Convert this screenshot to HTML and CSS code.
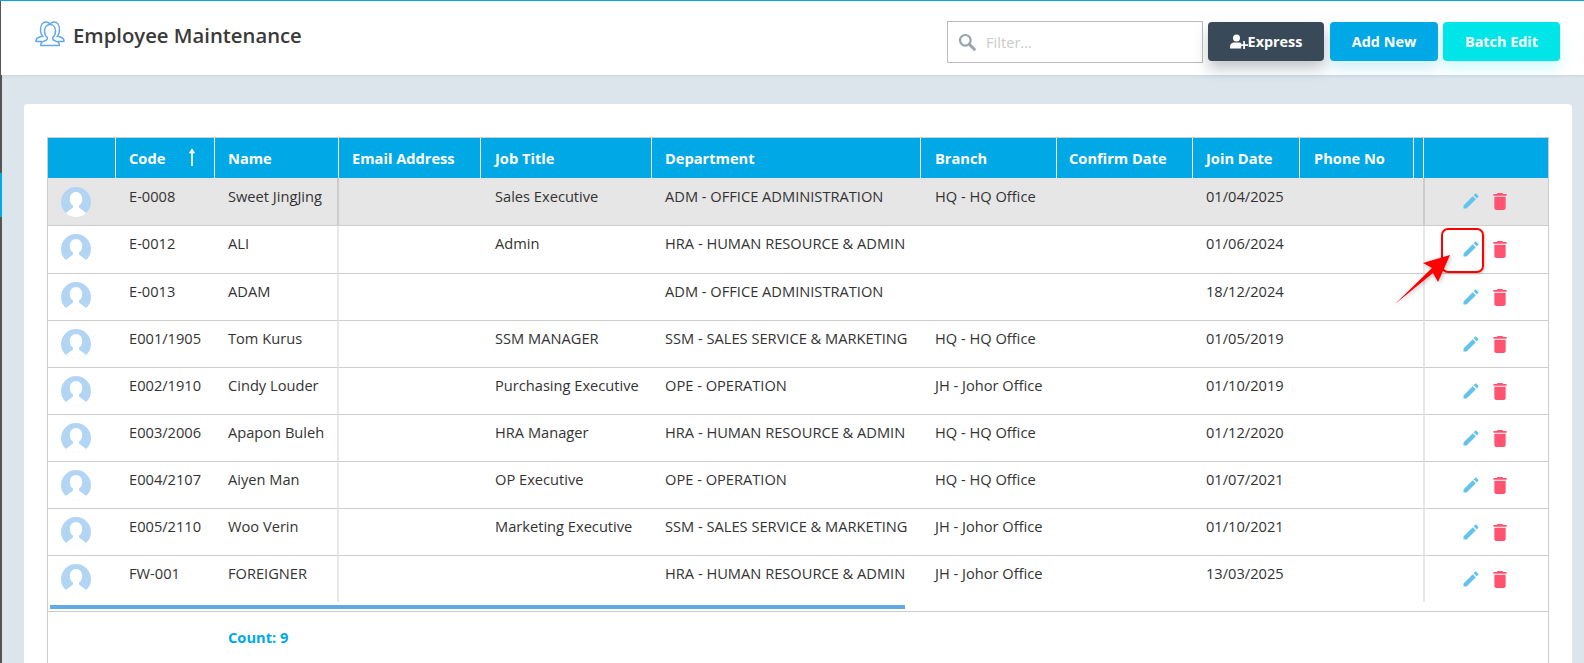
FILE: index.html
```html
<!DOCTYPE html>
<html lang="en">
<head>
<meta charset="utf-8">
<title>Employee Maintenance</title>
<link rel="stylesheet" href="styles.css">
</head>
<body>
<svg class="defs" width="0" height="0" aria-hidden="true">
  <symbol id="avatar" viewBox="0 0 30 30">
    <circle cx="15" cy="15" r="15" fill="#b3d5f4"/>
    <path d="M15 5c-3.600 0-6.200 3-6.200 7 0 3 1.200 5.300 3.200 6.600.2 1.400-.3 2.400-1.600 3.200L4.800 26A15 15 0 0 0 25.200 26l-5.600-4.200c-1.300-.8-1.800-1.800-1.600-3.200 2-1.300 3.200-3.600 3.200-6.600 0-4-2.600-7-6.200-7z" fill="#fff"/>
  </symbol>
  <symbol id="pencil" viewBox="0 0 24 24">
    <path d="M3 17.250V21h3.750L17.810 9.940l-3.750-3.750L3 17.250zM20.710 7.040c.39-.39.39-1.020 0-1.410l-2.340-2.340c-.39-.39-1.020-.39-1.410 0l-1.830 1.830 3.750 3.750 1.830-1.830z"/>
  </symbol>
  <symbol id="trash" viewBox="0 0 14 18">
    <path d="M1 16c0 1.100.9 2 2 2h8c1.100 0 2-.9 2-2V4H1v12zM14 1h-3.500l-1-1h-5l-1 1H0v2h14V1z"/>
  </symbol>
</svg>

<header class="topbar">
  <div class="title">
    <svg class="title-icon" viewBox="0 0 30 26" fill="none" stroke="#62a9ec" stroke-width="1.500" stroke-linejoin="round">
      <path d="M8.500 16c-1-.9-1.700-1.800-2.200-3-.5-1.200-.8-2.800-.8-4.200C5.500 4.200 7.700 1 11 1c1.500 0 2.800.6 3.800 1.800"/>
      <path d="M21.500 16c1-.9 1.700-1.800 2.200-3 .5-1.200.8-2.800.8-4.200C24.500 4.200 22.300 1 19 1c-1.500 0-2.800.6-3.800 1.800"/>
      <path d="M7 20.500H1c-.1-2 .3-3 2-3.700l3.800-1.600"/>
      <path d="M23 20.500h6c.1-2-.3-3-2-3.700l-3.800-1.600"/>
      <path d="M15 3.500c-3.200 0-5.500 2.800-5.500 6.500 0 2.800 1 5.200 2.900 6.600.2 1.500-.2 2.200-1.700 2.900l-3.300 1.400c-1.500.7-1.800 1.700-1.700 3.600h18.600c.1-1.900-.2-2.900-1.700-3.600l-3.300-1.400c-1.500-.7-1.900-1.400-1.700-2.900 1.900-1.400 2.900-3.800 2.900-6.600 0-3.700-2.300-6.500-5.500-6.500z"/>
    </svg>
    <h1 class="title-text">Employee Maintenance</h1>
  </div>
  <div class="actions">
    <label class="filter">
      <svg class="filter-icon" viewBox="0 0 18 18" fill="none" stroke="#9aa4ad">
        <circle cx="7.300" cy="7.300" r="5.300" stroke-width="2.200"/>
        <path d="M11.300 11.300l5 5" stroke-width="3" stroke-linecap="round"/>
      </svg>
      <input class="filter-input" type="text" placeholder="Filter...">
    </label>
    <button class="btn btn-express" type="button">
      <svg class="btn-icon" viewBox="0 0 18 14" fill="#fff">
        <circle cx="6.500" cy="3.600" r="3.500"/>
        <path d="M0 14v-2c0-2.200 1.800-4 4-4h5c.8 0 1.500.2 2.100.6V14z"/>
        <path d="M13.200 6.500h1.700v3.200H18v1.700h-3.100V14.500h-1.700v-3.100H10V9.700h3.200z"/>
      </svg>Express
    </button>
    <button class="btn btn-add" type="button">Add New</button>
    <button class="btn btn-batch" type="button">Batch Edit</button>
  </div>
</header>

<div class="body-wrap">
  <div class="rail"></div>
  <main class="content">
    <section class="card">
      <div class="grid-wrap">
        <table class="grid">
          <colgroup>
            <col class="c-avatar"><col class="c-code"><col class="c-name"><col class="c-email"><col class="c-job"><col class="c-dept"><col class="c-branch"><col class="c-confirm"><col class="c-join"><col class="c-phone"><col class="c-gap"><col class="c-act">
          </colgroup>
          <thead>
            <tr>
              <th></th>
              <th><span class="sort-head">Code<svg class="sort-icon" viewBox="0 0 8 18" fill="none" stroke="#fff"><path d="M4 18V1.500" stroke-width="1.700"/><path d="M1.300 5L4 .8 6.700 5z" fill="#fff" stroke-width=".5"/></svg></span></th>
              <th>Name</th><th>Email Address</th><th>Job Title</th><th>Department</th><th>Branch</th><th>Confirm Date</th><th>Join Date</th><th>Phone No</th><th></th><th></th>
            </tr>
          </thead>
          <tbody>
            <tr class="row selected">
              <td><svg class="avatar"><use href="#avatar"/></svg></td><td>E-0008</td><td class="sep">Sweet JingJing</td><td></td><td>Sales Executive</td><td>ADM - OFFICE ADMINISTRATION</td><td>HQ - HQ Office</td><td></td><td>01/04/2025</td><td></td><td class="gap"></td>
              <td class="act"><div class="tools"><svg class="pencil"><use href="#pencil"/></svg><svg class="trash"><use href="#trash"/></svg></div></td>
            </tr>
            <tr class="row tall">
              <td><svg class="avatar"><use href="#avatar"/></svg></td><td>E-0012</td><td class="sep">ALI</td><td></td><td>Admin</td><td>HRA - HUMAN RESOURCE &amp; ADMIN</td><td></td><td></td><td>01/06/2024</td><td></td><td class="gap"></td>
              <td class="act"><div class="tools"><svg class="pencil"><use href="#pencil"/></svg><svg class="trash"><use href="#trash"/></svg></div></td>
            </tr>
            <tr class="row">
              <td><svg class="avatar"><use href="#avatar"/></svg></td><td>E-0013</td><td class="sep">ADAM</td><td></td><td></td><td>ADM - OFFICE ADMINISTRATION</td><td></td><td></td><td>18/12/2024</td><td></td><td class="gap"></td>
              <td class="act"><div class="tools"><svg class="pencil"><use href="#pencil"/></svg><svg class="trash"><use href="#trash"/></svg></div></td>
            </tr>
            <tr class="row">
              <td><svg class="avatar"><use href="#avatar"/></svg></td><td>E001/1905</td><td class="sep">Tom Kurus</td><td></td><td>SSM MANAGER</td><td>SSM - SALES SERVICE &amp; MARKETING</td><td>HQ - HQ Office</td><td></td><td>01/05/2019</td><td></td><td class="gap"></td>
              <td class="act"><div class="tools"><svg class="pencil"><use href="#pencil"/></svg><svg class="trash"><use href="#trash"/></svg></div></td>
            </tr>
            <tr class="row">
              <td><svg class="avatar"><use href="#avatar"/></svg></td><td>E002/1910</td><td class="sep">Cindy Louder</td><td></td><td>Purchasing Executive</td><td>OPE - OPERATION</td><td>JH - Johor Office</td><td></td><td>01/10/2019</td><td></td><td class="gap"></td>
              <td class="act"><div class="tools"><svg class="pencil"><use href="#pencil"/></svg><svg class="trash"><use href="#trash"/></svg></div></td>
            </tr>
            <tr class="row">
              <td><svg class="avatar"><use href="#avatar"/></svg></td><td>E003/2006</td><td class="sep">Apapon Buleh</td><td></td><td>HRA Manager</td><td>HRA - HUMAN RESOURCE &amp; ADMIN</td><td>HQ - HQ Office</td><td></td><td>01/12/2020</td><td></td><td class="gap"></td>
              <td class="act"><div class="tools"><svg class="pencil"><use href="#pencil"/></svg><svg class="trash"><use href="#trash"/></svg></div></td>
            </tr>
            <tr class="row">
              <td><svg class="avatar"><use href="#avatar"/></svg></td><td>E004/2107</td><td class="sep">Aiyen Man</td><td></td><td>OP Executive</td><td>OPE - OPERATION</td><td>HQ - HQ Office</td><td></td><td>01/07/2021</td><td></td><td class="gap"></td>
              <td class="act"><div class="tools"><svg class="pencil"><use href="#pencil"/></svg><svg class="trash"><use href="#trash"/></svg></div></td>
            </tr>
            <tr class="row">
              <td><svg class="avatar"><use href="#avatar"/></svg></td><td>E005/2110</td><td class="sep">Woo Verin</td><td></td><td>Marketing Executive</td><td>SSM - SALES SERVICE &amp; MARKETING</td><td>JH - Johor Office</td><td></td><td>01/10/2021</td><td></td><td class="gap"></td>
              <td class="act"><div class="tools"><svg class="pencil"><use href="#pencil"/></svg><svg class="trash"><use href="#trash"/></svg></div></td>
            </tr>
            <tr class="row last">
              <td><svg class="avatar"><use href="#avatar"/></svg></td><td>FW-001</td><td class="sep">FOREIGNER</td><td></td><td></td><td>HRA - HUMAN RESOURCE &amp; ADMIN</td><td>JH - Johor Office</td><td></td><td>13/03/2025</td><td></td><td class="gap"></td>
              <td class="act"><div class="tools"><svg class="pencil"><use href="#pencil"/></svg><svg class="trash"><use href="#trash"/></svg></div></td>
            </tr>
          </tbody>
        </table>
        <div class="scrollbar"></div>
        <div class="grid-foot"><span class="count">Count: 9</span></div>
      </div>
    </section>
  </main>
</div>

<div class="callout-box"></div>
<svg class="callout-arrow" viewBox="0 0 60 52" aria-hidden="true">
  <path d="M1 50L38 14l-9-5L56 1 44 28l-5-9z" fill="#f00"/>
</svg>
</body>
</html>
```
FILE: styles.css
```css
* { box-sizing: border-box; }
html, body { height: 100%; }
body {
  margin: 0;
  height: 663px;
  overflow: hidden;
  display: flex;
  flex-direction: column;
  font-family: "Open Sans", "Liberation Sans", sans-serif;
  font-size: 14.65px;
  color: #333;
  background: #dde5ec;
  border-top: 1px solid #00a9e6;
}
.defs { position: absolute; }

.topbar {
  flex: none;
  height: 74px;
  display: flex;
  justify-content: space-between;
  background: #fff;
  border-left: 1px solid #555;
  padding: 0 24px 0 34px;
  box-shadow: 0 1px 3px rgba(120, 140, 160, .18);
  position: relative;
}
.title { display: flex; align-items: flex-start; padding-top: 20px; }
.title-icon { width: 30px; height: 26px; margin-right: 8px; }
.title-text {
  margin: 1px 0 0;
  font-size: 20.3px;
  line-height: 27px;
  font-weight: 600;
  color: #3a3a3a;
}
.actions { display: flex; align-items: flex-start; padding-top: 20px; }
.filter {
  width: 256px;
  height: 42px;
  display: flex;
  align-items: center;
  border: 1px solid #bbb;
  padding-left: 10px;
  margin-right: 5px;
  background: #fff;
}
.filter-icon { width: 18px; height: 18px; flex: none; }
.filter-input {
  border: 0;
  outline: 0;
  flex: 1;
  min-width: 0;
  margin-left: 8px;
  font: 14.65px "Open Sans", "Liberation Sans", sans-serif;
  background: transparent;
}
.filter-input::placeholder { color: #ccc; opacity: 1; }
.btn {
  height: 39px;
  margin-top: 1px;
  border: 0;
  border-radius: 4px;
  color: #fff;
  font: 700 14.4px "Open Sans", "Liberation Sans", sans-serif;
  display: flex;
  align-items: center;
  justify-content: center;
  padding: 0;
}
.btn-express {
  width: 116px;
  margin-right: 6px;
  background: #3a4957;
  box-shadow: 0 8px 14px rgba(58, 73, 87, .3);
}
.btn-add {
  width: 108px;
  margin-right: 5px;
  background: #00a9e6;
  box-shadow: 0 8px 14px rgba(0, 169, 230, .18);
}
.btn-batch {
  width: 117px;
  background: #00e5e8;
  box-shadow: 0 8px 14px rgba(0, 229, 232, .18);
}
.btn-icon { width: 18px; height: 15px; flex: none; }

.body-wrap { flex: 1; min-height: 0; display: flex; }
.rail {
  flex: none;
  width: 2px;
  background: linear-gradient(#555 0 98px, #00a9e6 98px 142px, #555 142px);
}
.content { flex: 1; min-width: 0; padding: 29px 12px 0 22px; }
.card {
  height: 100%;
  background: #fff;
  border-radius: 4px 4px 0 0;
  padding: 33px 23px 0;
}
.grid-wrap {
  height: 100%;
  border: 1px solid #ccc;
  border-bottom: 0;
}
.grid {
  width: 1500px;
  table-layout: fixed;
  border-collapse: separate;
  border-spacing: 0;
}
.c-avatar { width: 68px; }
.c-code { width: 99px; }
.c-name { width: 124px; }
.c-email { width: 142px; }
.c-job { width: 171px; }
.c-dept { width: 269px; }
.c-branch { width: 136px; }
.c-confirm { width: 136px; }
.c-join { width: 107px; }
.c-phone { width: 114px; }
.c-gap { width: 10px; }
.c-act { width: 124px; }

.grid th {
  height: 40px;
  padding: 0 0 0 13px;
  background: #00a9e6;
  color: #fff;
  font-weight: 700;
  text-align: left;
  white-space: nowrap;
  border-right: 1px solid #fff;
}
.grid th:last-child { border-right: 0; }
.grid th:nth-child(5), .grid th:nth-child(7), .grid th:nth-child(10) { padding-left: 14px; }
.grid th:nth-child(8) { padding-left: 12px; }
.sort-head { display: flex; align-items: center; width: 67px; justify-content: space-between; }
.sort-icon { width: 8px; height: 18px; margin-top: -3px; }

.row td {
  height: 47px;
  padding: 8px 0 0 13px;
  vertical-align: top;
  line-height: 19px;
  white-space: nowrap;
  border-bottom: 1px solid #ccc;
}
.row td:nth-child(5), .row td:nth-child(7) { padding-left: 14px; }
.row.tall td, .row.selected td { height: 48px; }
.row.last td { height: 46px; border-bottom: 0; }
.row.selected td { background: #e6e6e6; padding-top: 9px; }
.row td.sep { border-right: 2px solid #e8e8e8; }
.row.selected td.sep { border-right-color: #ccc; }
.row td.gap { border-right: 1px solid #e8e8e8; }
.row.selected td.gap { border-right-color: #ccc; }
.row td.act, .row.selected td.act { border-left: 1px solid #e8e8e8; padding: 0; }
.row.selected td.act { border-left-color: #ccc; }
.avatar { display: block; width: 30px; height: 30px; }
.tools { display: flex; align-items: center; padding: 13px 0 0 36px; }
.pencil { width: 20px; height: 20px; fill: #63c3eb; }
.trash { width: 14px; height: 17px; margin-left: 12px; fill: #ff5370; }

.scrollbar { width: 855px; height: 4px; margin: 3px 0 2px 2px; background: #62a9e6; }
.grid-foot { border-top: 1px solid #ccc; padding: 15px 0 0 180px; }
.count { font-weight: 700; color: #00a9e6; }

.callout-box {
  position: absolute;
  left: 1441px;
  top: 228px;
  width: 43px;
  height: 45px;
  border: 2px solid #f00;
  border-radius: 7px;
  box-shadow: 1px 1px 3px rgba(0, 0, 0, .2);
}
.callout-arrow {
  position: absolute;
  left: 1394px;
  top: 254px;
  width: 60px;
  height: 52px;
  filter: drop-shadow(1px 1px 2px rgba(0, 0, 0, .3));
}
```
